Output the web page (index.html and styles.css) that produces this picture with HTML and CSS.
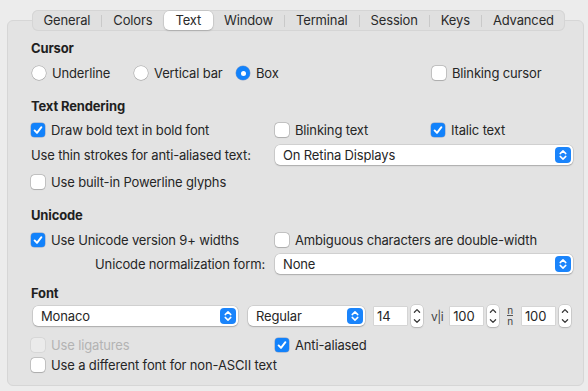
FILE: index.html
```html
<!DOCTYPE html>
<html lang="en">
<head>
  <meta charset="UTF-8" />
  <title>Profile - Text</title>
  <link rel="stylesheet" href="styles.css">
</head>
<body>
  <div class="window">
    <div class="tabs">
      <span class="tab">General</span><i class="divider"></i>
      <span class="tab">Colors</span>
      <span class="tab selected">Text</span>
      <span class="tab">Window</span><i class="divider"></i>
      <span class="tab">Terminal</span><i class="divider"></i>
      <span class="tab">Session</span><i class="divider"></i>
      <span class="tab">Keys</span><i class="divider"></i>
      <span class="tab">Advanced</span>
    </div>

    <div class="panel">
      <div class="title">Cursor</div>
      <div class="row radios mt5">
        <label class="option"><span class="circle"></span>Underline</label>
        <label class="option"><span class="circle"></span>Vertical bar</label>
        <label class="option"><span class="circle on"></span>Box</label>
        <label class="option"><span class="box"></span>Blinking cursor</label>
      </div>

      <div class="title mt13">Text Rendering</div>
      <div class="row mt4">
        <label class="option"><span class="box on"><svg viewBox="0 0 14 14"><path d="M3.6 7.4 L6 9.9 L10.4 4.2"/></svg></span>Draw bold text in bold font</label>
        <label class="option"><span class="box"></span>Blinking text</label>
        <label class="option"><span class="box on"><svg viewBox="0 0 14 14"><path d="M3.6 7.4 L6 9.9 L10.4 4.2"/></svg></span>Italic text</label>
      </div>
      <div class="row mt5">
        <span>Use thin strokes for anti-aliased text:</span>
        <div class="popup wide">
          <span>On Retina Displays</span>
          <span class="arrow"><svg viewBox="0 0 16 16"><path d="M5.2 6.6 L8 3.9 L10.8 6.6 M5.2 9.4 L8 12.1 L10.8 9.4"/></svg></span>
        </div>
      </div>
      <div class="row mt7">
        <label class="option"><span class="box"></span>Use built-in Powerline glyphs</label>
      </div>

      <div class="title mt13">Unicode</div>
      <div class="row mt5">
        <label class="option"><span class="box on"><svg viewBox="0 0 14 14"><path d="M3.6 7.4 L6 9.9 L10.4 4.2"/></svg></span>Use Unicode version 9+ widths</label>
        <label class="option span2"><span class="box"></span>Ambiguous characters are double-width</label>
      </div>
      <div class="row mt4">
        <span class="right">Unicode normalization form:</span>
        <div class="popup wide">
          <span>None</span>
          <span class="arrow"><svg viewBox="0 0 16 16"><path d="M5.2 6.6 L8 3.9 L10.8 6.6 M5.2 9.4 L8 12.1 L10.8 9.4"/></svg></span>
        </div>
      </div>

      <div class="title mt9">Font</div>
      <div class="font-row mt3">
        <div class="popup font-name">
          <span>Monaco</span>
          <span class="arrow"><svg viewBox="0 0 16 16"><path d="M5.2 6.6 L8 3.9 L10.8 6.6 M5.2 9.4 L8 12.1 L10.8 9.4"/></svg></span>
        </div>
        <div class="popup font-weight">
          <span>Regular</span>
          <span class="arrow"><svg viewBox="0 0 16 16"><path d="M5.2 6.6 L8 3.9 L10.8 6.6 M5.2 9.4 L8 12.1 L10.8 9.4"/></svg></span>
        </div>
        <span class="field">14</span>
        <span class="stepper"><svg viewBox="0 0 12 22"><path d="M3.4 7.2 L6 4.6 L8.6 7.2 M3.4 14.8 L6 17.4 L8.6 14.8"/></svg></span>
        <span class="spacing-icon">v|i</span>
        <span class="field">100</span>
        <span class="stepper"><svg viewBox="0 0 12 22"><path d="M3.4 7.2 L6 4.6 L8.6 7.2 M3.4 14.8 L6 17.4 L8.6 14.8"/></svg></span>
        <span class="fraction"><span>n</span><span class="under">n</span></span>
        <span class="field">100</span>
        <span class="stepper"><svg viewBox="0 0 12 22"><path d="M3.4 7.2 L6 4.6 L8.6 7.2 M3.4 14.8 L6 17.4 L8.6 14.8"/></svg></span>
      </div>
      <div class="row mt9">
        <label class="option disabled"><span class="box"></span>Use ligatures</label>
        <label class="option"><span class="box on"><svg viewBox="0 0 14 14"><path d="M3.6 7.4 L6 9.9 L10.4 4.2"/></svg></span>Anti-aliased</label>
      </div>
      <div class="row">
        <label class="option span3"><span class="box"></span>Use a different font for non-ASCII text</label>
      </div>
    </div>
  </div>
</body>
</html>
```

FILE: styles.css
```css
body {
  margin: 0;
  background: #ececec;
  font-family: Inter, "Noto Sans", sans-serif;
  font-size: 13px;
  letter-spacing: -0.15px;
  color: #262626;
}
.window {
  width: 588px;
  height: 391px;
  padding-top: 10px;
  box-sizing: border-box;
  overflow: hidden;
}

/* tab bar */
.tabs {
  position: relative;
  z-index: 1;
  display: flex;
  align-items: center;
  width: max-content;
  height: 21px;
  margin-left: 32px;
  background: #e0e0e0;
  border-radius: 6px;
  box-shadow: inset 0 0 0 1px #d5d5d5;
}
.tab {
  padding: 0 11.5px;
  line-height: 19px;
  height: 19px;
  color: #2a2a2a;
}
.tab.selected {
  background: white;
  border-radius: 5px;
  box-shadow: 0 0 0 0.5px rgba(0, 0, 0, 0.12), 0 1px 2px rgba(0, 0, 0, 0.15);
}
.divider {
  width: 1px;
  height: 12px;
  margin: 0 -0.5px;
  background: #c9c9c9;
}

/* group box */
.panel {
  margin: -11px 4px 0 7px;
  height: 366px;
  box-sizing: border-box;
  padding: 17px 0 0 23px;
  background: #e3e3e3;
  border: 1px solid #d6d6d6;
  border-radius: 6px;
}
.title {
  height: 20px;
  display: flex;
  align-items: center;
  font-weight: 700;
  color: #1f1f1f;
}
.row {
  height: 20px;
  display: grid;
  grid-template-columns: 244px 156px auto;
  align-items: center;
}
.radios {
  grid-template-columns: 102px 102px 196px auto;
  padding-left: 1px;
}
.mt3 { margin-top: 3px; }
.mt4 { margin-top: 4px; }
.mt5 { margin-top: 5px; }
.mt7 { margin-top: 7px; }
.mt9 { margin-top: 9px; }
.mt13 { margin-top: 13px; }
.span2 { grid-column: span 2; }
.span3 { grid-column: span 3; }
.right {
  text-align: right;
  padding-right: 10px;
}

/* checkboxes and radios */
.option {
  display: flex;
  align-items: center;
  gap: 6px;
  white-space: nowrap;
}
.box, .circle {
  flex: none;
  width: 14px;
  height: 14px;
  background: white;
  box-shadow: 0 0 0 0.5px rgba(0, 0, 0, 0.28), 0 0.5px 1px rgba(0, 0, 0, 0.12);
  display: flex;
  align-items: center;
  justify-content: center;
}
.box {
  border-radius: 3.5px;
}
.circle {
  border-radius: 50%;
}
.box.on, .circle.on {
  background: #1282fb;
  box-shadow: 0 0 0 0.5px rgba(0, 60, 160, 0.4);
}
.circle.on::after {
  content: "";
  width: 5px;
  height: 5px;
  border-radius: 50%;
  background: white;
}
.box svg {
  width: 14px;
  height: 14px;
}
.box path {
  fill: none;
  stroke: white;
  stroke-width: 1.9;
  stroke-linecap: round;
  stroke-linejoin: round;
}
.disabled {
  color: #b3b3b3;
}
.disabled .box {
  background: #ebebeb;
  box-shadow: 0 0 0 0.5px rgba(0, 0, 0, 0.1);
}

/* popup buttons */
.popup {
  height: 20px;
  box-sizing: border-box;
  display: flex;
  align-items: center;
  justify-content: space-between;
  padding: 0 2px 0 8px;
  background: white;
  border-radius: 5px;
  box-shadow: 0 0 0 0.5px rgba(0, 0, 0, 0.16), 0 1px 1.5px rgba(0, 0, 0, 0.18);
}
.popup.wide {
  grid-column: span 2;
  width: 298px;
}
.arrow {
  width: 16px;
  height: 16px;
  border-radius: 4px;
  background: #1a84fb;
}
.arrow svg {
  display: block;
  width: 16px;
  height: 16px;
}
.arrow path, .stepper path {
  fill: none;
  stroke: white;
  stroke-width: 1.5;
  stroke-linecap: round;
  stroke-linejoin: round;
}

/* font row */
.font-row {
  height: 20px;
  display: flex;
  align-items: center;
  padding-left: 2px;
}
.font-name {
  width: 205px;
}
.font-weight {
  width: 117px;
  margin-left: 10px;
}
.field {
  width: 33px;
  height: 18px;
  box-sizing: border-box;
  padding-left: 3px;
  line-height: 18px;
  background: white;
  box-shadow: 0 0 0 0.5px rgba(0, 0, 0, 0.12);
}
.font-weight + .field {
  margin-left: 9px;
}
.stepper {
  width: 12px;
  height: 22px;
  margin-left: 4px;
  border-radius: 4px;
  background: white;
  box-shadow: 0 0 0 0.5px rgba(0, 0, 0, 0.16), 0 1px 1.5px rgba(0, 0, 0, 0.15);
}
.stepper svg {
  display: block;
  width: 12px;
  height: 22px;
}
.stepper path {
  stroke: #3a3a3a;
  stroke-width: 1.3;
}
.spacing-icon {
  margin: 0 7px 0 8px;
  font-size: 12px;
  letter-spacing: -0.5px;
  color: #444;
}
.fraction {
  display: flex;
  flex-direction: column;
  align-items: center;
  margin: 0 9px 0 8px;
  font-size: 10px;
  line-height: 9px;
  color: #444;
}
.fraction .under {
  border-top: 1px solid #555;
  padding-top: 1px;
}
```
